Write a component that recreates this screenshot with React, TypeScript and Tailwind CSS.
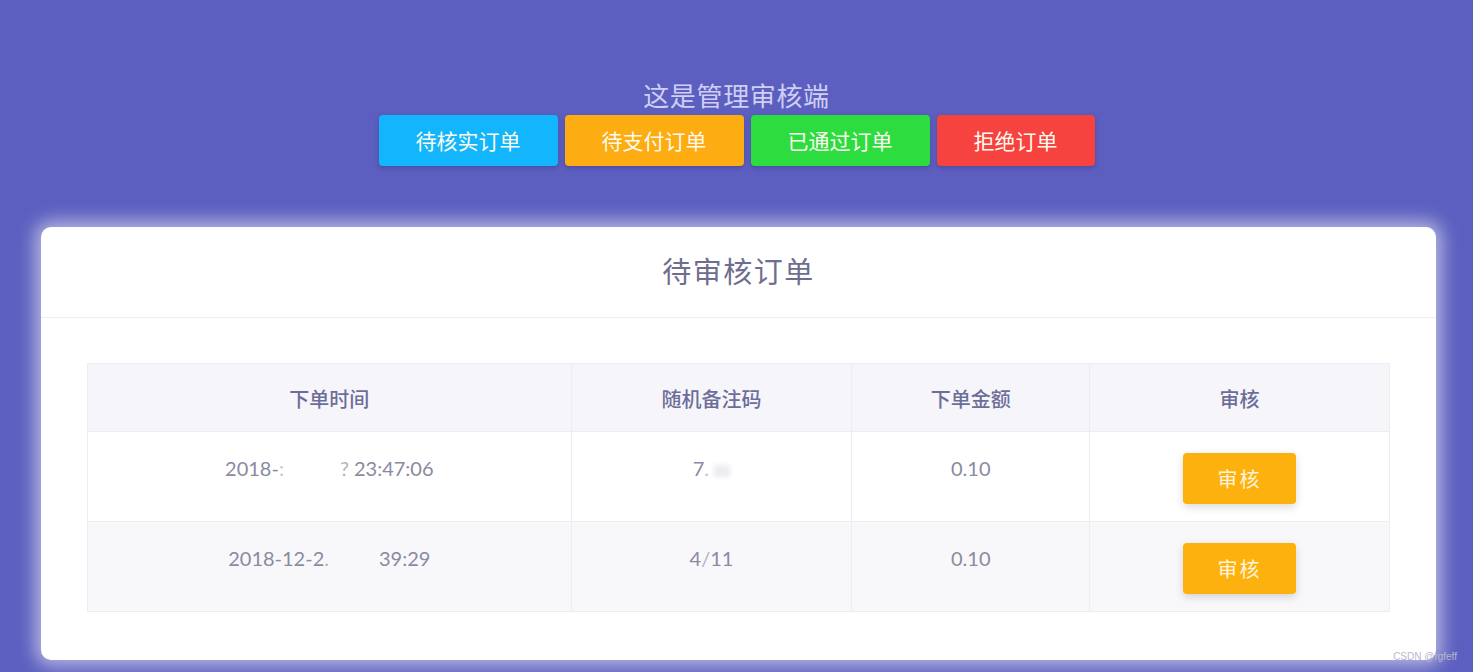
import React from 'react'

const tabs = [
  { label: '待核实订单', cls: 'w-[179px] bg-[#13b6fd]' },
  { label: '待支付订单', cls: 'w-[179px] bg-[#fdac12]' },
  { label: '已通过订单', cls: 'w-[179px] bg-[#2ddd3f]' },
  { label: '拒绝订单', cls: 'w-[158px] bg-[#f6433f]' },
]

const font = { fontFamily: 'Lato, "Noto Sans CJK SC", sans-serif' }

function Blur({ w }: { w: string }) {
  // redacted part of the value, as in the screenshot
  return <span className={`inline-block h-[12px] align-middle bg-[#ececf1] blur-[2px] ${w}`} />
}

export default function App() {
  return (
    <div className="h-[672px] overflow-hidden bg-[#5c5fbf] flex flex-col" style={font}>
      <div className="pt-[79px] flex flex-col items-center">
        <h1 className="text-[26px] leading-[35px] text-[#cfcff3] tracking-wide">这是管理审核端</h1>
        <div className="flex gap-[7px] mt-[1px]">
          {tabs.map((t) => (
            <button
              key={t.label}
              className={`${t.cls} h-[51px] rounded-[4px] text-[21px] text-[#fdfbef] shadow-[0_2px_4px_rgba(40,40,110,0.35)]`}
            >
              {t.label}
            </button>
          ))}
        </div>
      </div>

      <div className="ml-[41px] mr-[37px] mt-[61px] bg-white rounded-[10px] shadow-[0_0_18px_6px_rgba(255,255,255,0.55)]">
        <div className="h-[91px] flex items-center justify-center border-b border-[#ededf2]">
          <h2 className="text-[29px] text-[#6e6e8e] tracking-wider">待审核订单</h2>
        </div>
        <div className="px-[46px] pt-[45px] pb-[48px]">
          <table className="w-full border-collapse border border-[#ececf1] text-center">
            <colgroup>
              <col className="w-[484px]" />
              <col className="w-[281px]" />
              <col className="w-[238px]" />
              <col className="w-[300px]" />
            </colgroup>
            <thead>
              <tr className="h-[68px] bg-[#f6f6fa]">
                {['下单时间', '随机备注码', '下单金额', '审核'].map((h) => (
                  <th key={h} className="border border-[#ececf1] text-[20px] font-medium text-[#6d6d9a] pt-[2px]">
                    {h}
                  </th>
                ))}
              </tr>
            </thead>
            <tbody className="text-[20px] text-[#8a8aa2]">
              <tr className="h-[90px] bg-white">
                <td className="border border-[#ececf1] align-top pt-[21px]">
                  2018-<span className="text-[#c4c4d2]">:</span>
                  <span className="inline-block w-[56px]" />
                  <span className="text-[#b0b0c2]">?</span> 23:47:06
                </td>
                <td className="border border-[#ececf1] align-top pt-[21px]">
                  7<span className="text-[#c4c4d2]">.</span> <Blur w="w-[16px]" />
                </td>
                <td className="border border-[#ececf1] align-top pt-[21px]">0.10</td>
                <td className="border border-[#ececf1] align-top pt-[21px]">
                  <button className="w-[113px] h-[51px] rounded-[4px] bg-[#fdb10f] text-[20px] text-[#fff5dc] tracking-widest shadow-[0_3px_8px_rgba(0,0,0,0.15)]">
                    审核
                  </button>
                </td>
              </tr>
              <tr className="h-[90px] bg-[#f8f8fb]">
                <td className="border border-[#ececf1] align-top pt-[21px]">
                  2018-12-2<span className="text-[#b0b0c2]">.</span>
                  <span className="inline-block w-[50px]" />
                  39:29
                </td>
                <td className="border border-[#ececf1] align-top pt-[21px]">
                  4<span className="text-[#b0b0c2]">/</span>11
                </td>
                <td className="border border-[#ececf1] align-top pt-[21px]">0.10</td>
                <td className="border border-[#ececf1] align-top pt-[21px]">
                  <button className="w-[113px] h-[51px] rounded-[4px] bg-[#fdb10f] text-[20px] text-[#fff5dc] tracking-widest shadow-[0_3px_8px_rgba(0,0,0,0.15)]">
                    审核
                  </button>
                </td>
              </tr>
            </tbody>
          </table>
        </div>
      </div>

      <div className="relative">
        <span className="absolute right-[16px] -top-[11px] text-[10px] text-[#b8b8cc]" style={{ fontFamily: '"Liberation Sans", sans-serif' }}>
          CSDN @rgfeff
        </span>
      </div>
    </div>
  )
}
